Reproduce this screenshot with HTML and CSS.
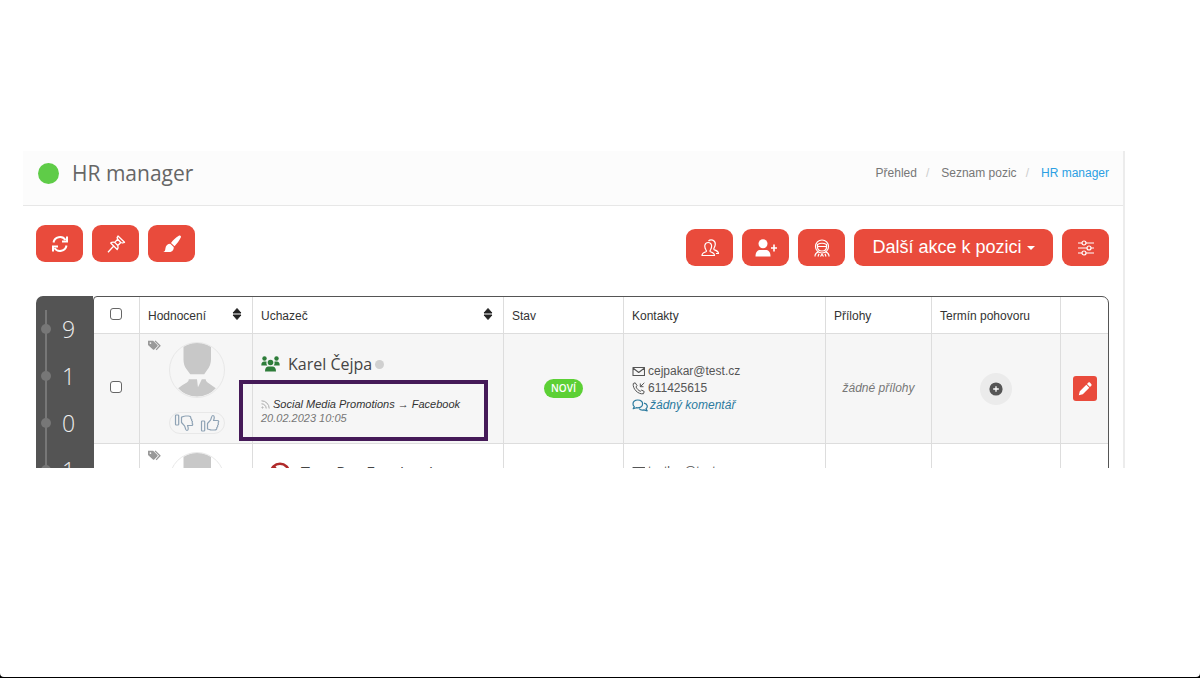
FILE: index.html
```html
<!DOCTYPE html>
<html lang="cs">
<head>
<meta charset="utf-8">
<meta name="viewport" content="width=device-width, initial-scale=1">
<title>HR manager</title>
<link rel="stylesheet" href="styles.css">
</head>
<body>
<svg class="sprite" aria-hidden="true">
  <symbol id="i-tags" viewBox="0 0 24 20">
    <path fill="currentColor" d="M0 1h9.500l8 8c.8.8.8 1.600 0 2.400l-6 6c-.8.8-1.600.8-2.400 0L0 9zM4.500 3.800a1.600 1.600 0 1 0 0 3.200 1.600 1.600 0 0 0 0-3.200z" fill-rule="evenodd"/>
    <path fill="none" stroke="currentColor" stroke-width="2.400" d="M13 1.500l9 8.800-7 7.700"/>
  </symbol>
  <symbol id="i-sort" viewBox="0 0 10 14">
    <path fill="currentColor" d="M5 1.500l4 4.500h-8zM5 12.500l4-4.500h-8z" stroke="currentColor" stroke-linejoin="round" stroke-width="1"/>
  </symbol>
  <symbol id="i-avatar" viewBox="0 0 56 56">
    <path fill="#c8c8c8" d="M14 4Q28-5 42.500 4V17q0 6-4 11l-3 4.500H21l-4-5.500q-3-4-3-10z"/>
    <path fill="#c8c8c8" d="M8.500 47q5-4 9-6 2-1 2-3.500h8.500l1 8.500 4-8.500h4q0 2.500 2 3.500l8.500 6Q40 55.500 28 55.500T8.500 47z"/>
  </symbol>
  <symbol id="i-thumb" viewBox="0 0 20 20">
    <g fill="none" stroke="currentColor" stroke-width="1.200" stroke-linejoin="round">
      <rect x="1.500" y="8" width="3.200" height="10" rx=".8"/>
      <path d="M7.500 10.500l3-3.300c1-1.200.8-4.700 2.300-4.700 1.700 0 1.900 2.300.7 5h3.800c1.500 0 1.900 1.300.8 2.400.6.900.4 1.900-.5 2.500.4.900 0 1.700-.8 2.200.2 1.800-.8 2.400-2.300 2.400h-3c-1.800 0-2.500-1-4-1z"/>
    </g>
  </symbol>
  <symbol id="i-mail" viewBox="0 0 13 11">
    <path fill="none" stroke="currentColor" stroke-width="1.100" stroke-linejoin="round" d="M1 1.500h11.500v8H1zM1 2l5.700 4.500L12.500 2"/>
  </symbol>
</svg>

<main class="panel">
  <header class="heading">
    <h1 class="title"><span class="status-dot"></span>HR manager</h1>
    <nav aria-label="Drobečková navigace">
      <ol class="crumbs">
        <li><a href="#">Přehled</a></li>
        <li><a href="#">Seznam pozic</a></li>
        <li><a class="current" href="#">HR manager</a></li>
      </ol>
    </nav>
  </header>

  <div class="toolbar">
    <div class="group">
      <button class="btn" aria-label="Obnovit"><svg width="20" height="20" viewBox="0 0 20 20" fill="none" stroke="currentColor" stroke-width="2"><path d="M3.500 8.500A6.600 6.600 0 0 1 15.500 6M16.500 11.500A6.600 6.600 0 0 1 4.500 14"/><path d="M17 2.500v5h-5M3 17.500v-5h5"/></svg></button>
      <button class="btn" aria-label="Připnout"><svg width="20" height="20" viewBox="0 0 20 20" fill="none" stroke="currentColor" stroke-width="1.300" stroke-linejoin="round"><path d="M12 2l6.500 6.300-2 .7-1.700-.5-3 3c.5 1.500.3 3-.6 4L4.700 9c1-.9 2.600-1 4-.6l3-3.200-.6-1.600zM8.700 8.400l3.100 3.100M11.700 5.200l3.100 3.300M7.500 12.300L2 18.200"/></svg></button>
      <button class="btn" aria-label="Vzhled"><svg width="20" height="20" viewBox="0 0 20 20" fill="currentColor"><path d="M16.800 1.800c1.500-.9 2.700.3 2 1.800-1.600 3.200-3.500 6-6.300 8.600L9 9c2.200-3 4.600-5.300 7.800-7.200zM8.300 9.800l3.400 3.200c.3 2.800-1.500 5-4.200 5H1.200c1.800-.7 2-1.700 2.200-3.500.3-2.700 2.300-4.700 4.900-4.700z"/></svg></button>
    </div>
    <div class="group">
      <button class="btn" aria-label="Uchazeči"><svg width="20" height="20" viewBox="0 0 20 20" fill="none" stroke="currentColor" stroke-width="1.200" stroke-linejoin="round"><path d="M2 17.500h12.500c0-2-1-2.700-4-3.700-.8-.4-.6-1.200 0-2 2-3.300 1.200-7.300-2.300-7.300s-4.300 4-2.300 7.300c.6.800.8 1.600 0 2-3 1-3.900 1.700-3.900 3.700z"/><path d="M8.500 3C10.500.800 15.300 1.800 15.300 6c0 1.800-.5 2.800-1.200 4-.5.900-.3 1.600.4 1.900 2.800 1 4 1.600 4 3.600H16"/></svg></button>
      <button class="btn" aria-label="Přidat uchazeče"><svg width="24" height="20" viewBox="0 0 24 20" fill="currentColor"><circle cx="9" cy="5.800" r="4.500"/><path d="M1.500 18.500c0-4.500 2-6.500 5-6.500h5c3 0 5 2 5 6.500z"/><path d="M19.200 6.500h1.600v2.700h2.200v1.600h-2.200v2.700h-1.600v-2.700H17V9.200h2.200z"/></svg></button>
      <button class="btn" aria-label="Robot"><svg width="20" height="20" viewBox="0 0 20 20" fill="none" stroke="currentColor" stroke-width="1.200"><circle cx="10" cy="8.500" r="6.500"/><path d="M5.500 6.500q4.500-2.500 9 0V9q0 4-4.500 4T5.500 9zM5.800 8.500h8.400M3 18.500c0-2.500 1-4 3.500-4.700M17 18.500c0-2.500-1-4-3.500-4.700M6 18.500l1-2.800M14 18.500l-1-2.800M8.500 18.500l1.500-2.300 1.500 2.300"/></svg></button>
      <button class="btn btn-wide">Další akce k pozici<span class="caret"></span></button>
      <button class="btn" aria-label="Filtry"><svg width="20" height="20" viewBox="0 0 20 20" fill="none" stroke="currentColor" stroke-width="1.200"><path d="M2 5h4M10 5h8M2 10h9M15 10h3M2 15h4M10 15h8"/><circle cx="8" cy="5" r="2"/><circle cx="13" cy="10" r="2"/><circle cx="8" cy="15" r="2"/></svg></button>
    </div>
  </div>

  <div class="board">
    <aside class="counts">
      <ul>
        <li>9</li>
        <li>1</li>
        <li>0</li>
        <li>1</li>
      </ul>
    </aside>
    <div class="table-frame">
      <table class="people">
        <colgroup>
          <col class="c-check"><col class="c-rate"><col class="c-name"><col class="c-state"><col class="c-contact"><col class="c-files"><col class="c-date"><col class="c-edit">
        </colgroup>
        <thead>
          <tr>
            <th class="check"><input type="checkbox" aria-label="Vybrat vše"></th>
            <th><div class="sortable">Hodnocení<svg width="10" height="14"><use href="#i-sort"/></svg></div></th>
            <th><div class="sortable">Uchazeč<svg width="10" height="14"><use href="#i-sort"/></svg></div></th>
            <th>Stav</th>
            <th>Kontakty</th>
            <th>Přílohy</th>
            <th>Termín pohovoru</th>
            <th></th>
          </tr>
        </thead>
        <tbody>
          <tr class="shaded">
            <td class="check"><input type="checkbox" aria-label="Vybrat Karel Čejpa"></td>
            <td class="rate">
              <div class="rating">
                <svg class="tags" width="13" height="11"><use href="#i-tags"/></svg>
                <div class="person">
                  <svg class="avatar" width="56" height="56"><use href="#i-avatar"/></svg>
                  <div class="votes">
                    <button aria-label="Nelíbí se"><svg class="down" width="20" height="20"><use href="#i-thumb"/></svg></button>
                    <button aria-label="Líbí se"><svg width="20" height="20"><use href="#i-thumb"/></svg></button>
                  </div>
                </div>
              </div>
            </td>
            <td class="who">
              <h2 class="name"><svg class="team" width="19" height="16" viewBox="0 0 19 16" fill="currentColor"><circle cx="3.500" cy="2.500" r="2.200"/><circle cx="15.500" cy="2.500" r="2.200"/><circle cx="9.500" cy="6.500" r="2.800"/><path d="M.3 9.500c0-3 1-4 3-4h2.200Q5 8 6.300 9.500zM18.700 9.500c0-3-1-4-3-4h-2.200q.5 2.500-.8 4zM4 15.500c0-3.500 1.300-5 3.500-5h4c2.200 0 3.500 1.500 3.500 5z"/></svg>Karel Čejpa<span class="dot"></span></h2>
              <div class="origin">
                <p class="source"><svg width="9" height="9" viewBox="0 0 9 9" fill="none" stroke="#aaa"><circle cx="1.500" cy="7.500" r=".6"/><path d="M.5 3.800a4.700 4.700 0 0 1 4.700 4.700M.5.800a7.700 7.700 0 0 1 7.700 7.700"/></svg>Social Media Promotions → Facebook</p>
                <time datetime="2023-02-20T10:05">20.02.2023 10:05</time>
                <span class="highlight"></span>
              </div>
            </td>
            <td class="mid"><span class="badge">NOVÍ</span></td>
            <td>
              <ul class="contact">
                <li><svg width="13" height="11"><use href="#i-mail"/></svg>cejpakar@test.cz</li>
                <li><svg width="13" height="13" viewBox="0 0 13 13" fill="none" stroke="currentColor" stroke-linejoin="round"><path d="M3.200.8L1.300 1.500C.3 6.500 6 12.800 11.500 11.700l.7-2.200-2.500-1.400-1.400 1.200C6.500 8.500 4.800 6.700 4 5l1-1.500zM12.300.8L8.300 4.700M8.300 1.500v3.200h3.200"/></svg>611425615</li>
                <li><a href="#"><svg width="16" height="13" viewBox="0 0 16 13" fill="none" stroke="currentColor" stroke-width="1.200" stroke-linejoin="round"><path d="M5.800 1C3 1 1 2.700 1 4.900c0 1.200.5 2 1.300 2.700L1.200 9.700l3.200-1c3.600.6 6.200-1.300 6.200-3.800S8.500 1 5.800 1z"/><path d="M12 4.200c4 .6 3.800 4.300 2 5.600l1.200 2-3.300-.9c-2 .5-3.900-.2-4.700-1.300"/></svg>žádný komentář</a></li>
              </ul>
            </td>
            <td class="mid none">žádné přílohy</td>
            <td class="mid"><button class="add" aria-label="Přidat termín"><svg width="14" height="14" viewBox="0 0 14 14"><circle cx="7" cy="7" r="6.600" fill="#555"/><path d="M7 4.200v5.600M4.200 7h5.600" stroke="#fff" stroke-width="1.300"/></svg></button></td>
            <td class="edit-cell"><button class="edit" aria-label="Upravit"><svg width="14" height="14" viewBox="0 0 14 14" fill="currentColor"><path d="M.8 13.200l1-4L8.300 2.700l3 3L4.800 12.200zM9 2l1.200-1.200c.7-.6 1.300-.6 1.900 0l1.100 1.100c.6.600.6 1.200 0 1.900L12 5z"/></svg></button></td>
          </tr>
          <tr class="next">
            <td class="check"></td>
            <td class="rate">
              <div class="rating">
                <svg class="tags" width="13" height="11"><use href="#i-tags"/></svg>
                <div class="person">
                  <svg class="avatar" width="56" height="56"><use href="#i-avatar"/></svg>
                </div>
              </div>
            </td>
            <td class="who">
              <h2 class="name"><svg class="ban" width="22" height="22" viewBox="0 0 22 22" fill="none" stroke="currentColor" stroke-width="2.500"><circle cx="11" cy="11" r="9.200"/><path d="M5 5l12 12"/></svg>Test Pro Facebook</h2>
            </td>
            <td></td>
            <td>
              <ul class="contact">
                <li><svg width="13" height="11"><use href="#i-mail"/></svg>testkar@test.cz</li>
              </ul>
            </td>
            <td></td>
            <td></td>
            <td></td>
          </tr>
        </tbody>
      </table>
    </div>
  </div>
</main>
</body>
</html>
```

FILE: styles.css
```css
* { box-sizing: border-box; }

html { background: #000; }

body {
  margin: 0;
  min-height: calc(100vh - 1px);
  display: flow-root;
  border-radius: 0 0 4px 4px;
  background: #fff;
  font: 12px/17px "Liberation Sans", Arial, sans-serif;
  color: #555;
}

h1, h2, p, ul, ol { margin: 0; padding: 0; }
ul, ol { list-style: none; }
a { color: inherit; text-decoration: none; }
button { border: 0; padding: 0; background: none; color: inherit; font: inherit; cursor: pointer; }
svg { display: block; flex: none; }
.sprite { position: absolute; width: 0; height: 0; }

.panel {
  height: 317px;
  margin: 151px 75px 0 23px;
  overflow: hidden;
  border-right: 2px solid #ececec;
}

.heading {
  display: flex;
  justify-content: space-between;
  align-items: center;
  height: 55px;
  padding: 0 14px 10px 15px;
  background: #fcfcfc;
  border-bottom: 1px solid #e7e7e7;
}

.title {
  display: flex;
  align-items: center;
  gap: 13px;
  font: 400 21px/28px "Open Sans", sans-serif;
  color: #666;
}

.status-dot { width: 21px; height: 21px; border-radius: 50%; background: #5fcc48; }

.crumbs { display: flex; color: #777; }
.crumbs li + li::before { content: "/"; padding: 0 12px 0 9px; color: #ccc; }
.crumbs .current { color: #2c9fe3; }

.toolbar {
  display: flex;
  justify-content: space-between;
  padding: 19px 14px 0 13px;
}

.group { display: flex; gap: 9px; }
.group + .group { padding-top: 4px; }

.btn {
  display: flex;
  align-items: center;
  justify-content: center;
  width: 47px;
  height: 37px;
  border-radius: 9px;
  background: #e94b3c;
  color: #fff;
}

.btn-wide { width: 199px; gap: 5px; font-size: 18px; }
.caret { border: 4px solid transparent; border-top-color: #fff; border-bottom: 0; }

.board {
  display: flex;
  margin: 30px 14px 0 13px;
}

.counts {
  width: 57px;
  padding-top: 14px;
  border-radius: 7px 0 0 0;
  background: #545454;
}

.counts ul {
  margin-left: 9px;
  border-left: 2px solid #777;
}

.counts li {
  display: flex;
  align-items: center;
  gap: 11px;
  height: 47px;
  margin-left: -6px;
  padding-bottom: 9px;
  font: 300 23px/38px "Open Sans", sans-serif;
  color: #eee;
}

.counts li::before {
  content: "";
  width: 10px;
  height: 10px;
  border-radius: 50%;
  background: #777;
}

.table-frame {
  flex: 1;
  min-width: 0;
  border: 1px solid #555;
  border-radius: 4px 7px 0 0;
  overflow: hidden;
}

.people {
  width: 100%;
  table-layout: fixed;
  border-spacing: 0;
}

.c-check { width: 46px; }
.c-rate { width: 113px; }
.c-state { width: 120px; }
.c-contact { width: 202px; }
.c-files { width: 106px; }
.c-date { width: 129px; }
.c-edit { width: 47px; }

.people th, .people td {
  padding: 0 8px;
  border-right: 1px solid #ddd;
  border-bottom: 1px solid #ddd;
  text-align: left;
  font-weight: 400;
}

.people th:last-child, .people td:last-child { border-right: 0; }
.people th { height: 37px; padding-top: 2px; color: #333; white-space: nowrap; }
.people td { height: 110px; }
.shaded td { background: #f6f6f6; }
.people .check { padding: 0 1px 3px 0; text-align: center; }
.people .mid { padding: 0; text-align: center; }
.people .none { font-style: italic; color: #777; }

input[type="checkbox"] {
  appearance: none;
  width: 12px;
  height: 12px;
  margin: 0;
  border: 1px solid #666;
  border-radius: 3px;
  background: #fff;
  vertical-align: middle;
}

.sortable { display: flex; justify-content: space-between; align-items: center; padding-right: 2px; }
.sortable svg { margin-bottom: 4px; color: #222; }

.people .rate { vertical-align: top; }
.rating { display: flex; gap: 8px; padding-top: 6px; }
.tags { color: #999; }
.person { display: flex; flex-direction: column; gap: 14px; padding-top: 2px; }
.avatar { border: 1px solid #e8e8e8; border-radius: 50%; }

.votes {
  display: flex;
  justify-content: space-between;
  align-items: center;
  width: 56px;
  height: 22px;
  padding: 0 4px;
  border: 1px solid #e8e8e8;
  border-radius: 11px;
  color: #8fa3b5;
}
.down { transform: scaleY(-1); }

.people .who { vertical-align: top; padding-top: 18px; }
.people .next td { vertical-align: top; }
.people .next .who { padding-top: 17px; padding-left: 16px; }
.next .contact { padding-top: 19px; }

.name {
  display: flex;
  align-items: center;
  font: 500 16px/24px "Open Sans", sans-serif;
  color: #444;
}
.team { margin-right: 8px; color: #2e7d3a; }
.ban { margin-right: 10px; color: #b02a2a; }
.dot { width: 9px; height: 9px; margin-left: 3px; border-radius: 50%; background: #d0d0d0; }

.origin { position: relative; padding-top: 21px; font: italic 11px/14px "Liberation Sans", Arial, sans-serif; color: #777; }
.source { display: flex; align-items: center; gap: 3px; color: #333; white-space: nowrap; }
.origin time { display: block; }
.highlight {
  position: absolute;
  inset: 4px 7px -16px -22px;
  border: 4px solid #451a58;
}

.badge {
  display: inline-block;
  padding: 0 7px;
  border-radius: 10px;
  background: #5cd035;
  color: #fff;
  font: 600 10px/19px "Open Sans", sans-serif;
}

.contact li, .contact a { display: flex; align-items: center; gap: 3px; height: 17px; }
.contact a { gap: 2px; font-style: italic; color: #2b7a9e; }

.add {
  display: inline-flex;
  align-items: center;
  justify-content: center;
  width: 32px;
  height: 32px;
  border-radius: 50%;
  background: #ebebeb;
  vertical-align: middle;
}

.people .edit-cell { padding: 0; text-align: center; }
.edit {
  display: inline-flex;
  align-items: center;
  justify-content: center;
  width: 24px;
  height: 25px;
  border-radius: 3px;
  background: #e94b3c;
  color: #fff;
  vertical-align: middle;
}
```
